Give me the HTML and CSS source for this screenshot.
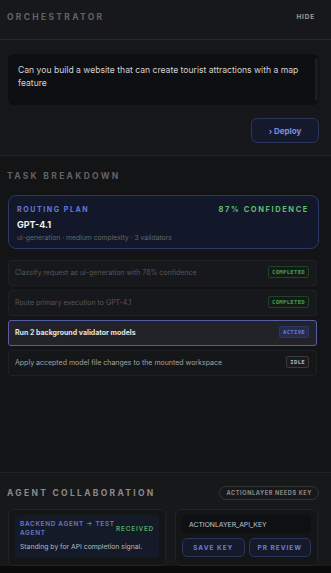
FILE: index.html
```html
<!DOCTYPE html>
<html lang="en">

<head>
    <meta charset="UTF-8">
    <title>Orchestrator</title>
    <link rel="stylesheet" href="styles.css">
</head>

<body>
    <div class="app">
        <header class="top_bar">
            <span class="eyebrow">Orchestrator</span>
            <span class="hide_link">Hide</span>
        </header>

        <section class="prompt">
            <div class="prompt_box">
                <p>Can you build a website that can create tourist attractions with a map feature</p>
                <div class="scroll_thumb"></div>
            </div>
            <div class="prompt_actions">
                <button class="deploy">&rsaquo; Deploy</button>
            </div>
        </section>

        <section class="tasks">
            <h3 class="eyebrow">Task Breakdown</h3>

            <div class="plan">
                <div class="plan_head">
                    <span class="plan_label">Routing Plan</span>
                    <span class="plan_conf">87% Confidence</span>
                </div>
                <div class="plan_model">GPT-4.1</div>
                <div class="plan_meta">ui-generation · medium complexity · 3 validators</div>
            </div>

            <div class="task_list">
                <div class="task done">
                    <span>Classify request as ui-generation with 78% confidence</span>
                    <span class="badge green">Completed</span>
                </div>
                <div class="task done">
                    <span>Route primary execution to GPT-4.1</span>
                    <span class="badge green">Completed</span>
                </div>
                <div class="task active">
                    <span>Run 2 background validator models</span>
                    <span class="badge blue">Active</span>
                </div>
                <div class="task idle">
                    <span>Apply accepted model file changes to the mounted workspace</span>
                    <span class="badge gray">Idle</span>
                </div>
            </div>
        </section>

        <section class="collab">
            <div class="collab_head">
                <h3 class="eyebrow light">Agent Collaboration</h3>
                <span class="pill">ActionLayer needs key</span>
            </div>

            <div class="collab_grid">
                <div class="panel">
                    <div class="message">
                        <div class="message_head">
                            <span class="message_route">Backend Agent &rarr; Test Agent</span>
                            <span class="message_state">Received</span>
                        </div>
                        <div class="message_body">Standing by for API completion signal.</div>
                    </div>
                </div>
                <div class="panel">
                    <div class="key_input">ACTIONLAYER_API_KEY</div>
                    <div class="key_actions">
                        <button class="ghost">Save Key</button>
                        <button class="ghost">PR Review</button>
                    </div>
                </div>
            </div>
        </section>
        <div class="bottom_strip"></div>
    </div>
</body>

</html>
```

FILE: styles.css
```css
* {
    box-sizing: border-box;
}

body {
    margin: 0;
    background: #131416;
    font-family: Inter, "Liberation Sans", sans-serif;
    color: #d6d6d6;
}

.app {
    display: flex;
    flex-direction: column;
    height: 573px;
    overflow: hidden;
}

h3 {
    margin: 0;
}

.eyebrow {
    font-size: 8.5px;
    font-weight: 700;
    letter-spacing: 2.3px;
    text-transform: uppercase;
    color: #626262;
}

.eyebrow.light {
    color: #8a8a8a;
}

.top_bar {
    height: 40px;
    display: flex;
    justify-content: space-between;
    align-items: center;
    padding: 0 16px 6px 7px;
    background: #17181b;
    border-bottom: 1px solid #26272b;
}

.hide_link {
    font-size: 6.5px;
    font-weight: 700;
    letter-spacing: 0.8px;
    text-transform: uppercase;
    color: #9c9c9c;
}

.prompt {
    padding: 14px 12px 12px 8px;
    background: #16171a;
    border-bottom: 1px solid #232428;
}

.prompt_box {
    position: relative;
    height: 51px;
    background: #0e0f12;
    border-radius: 6px;
    padding: 10px 12px 0 10px;
}

.prompt_box p {
    margin: 0;
    font-size: 8.6px;
    line-height: 13px;
    color: #d4d4d4;
}

.scroll_thumb {
    position: absolute;
    right: 1px;
    top: 4px;
    bottom: 4px;
    width: 3px;
    border-radius: 2px;
    background: #1c1d20;
}

.prompt_actions {
    display: flex;
    justify-content: flex-end;
    margin-top: 13px;
}

.deploy {
    width: 68px;
    height: 25px;
    border-radius: 6px;
    border: 1px solid #2b3558;
    background: #141a2b;
    color: #7e8de0;
    font-family: inherit;
    font-size: 8px;
    font-weight: 700;
    cursor: pointer;
}

.tasks {
    flex: 1;
    padding: 15px 14px 0 8px;
    background: #131416;
}

.tasks .eyebrow {
    margin-left: -1px;
}

.plan {
    margin-top: 14px;
    margin-right: -2px;
    height: 54px;
    border: 1px solid #2d3866;
    border-radius: 8px;
    background: #121829;
    padding: 9px 9px 0 8px;
}

.plan_head {
    display: flex;
    justify-content: space-between;
}

.plan_label,
.plan_conf {
    font-size: 7px;
    font-weight: 700;
    letter-spacing: 1.6px;
    text-transform: uppercase;
}

.plan_label {
    color: #6a78d2;
}

.plan_conf {
    color: #5dbf6e;
    font-size: 7.5px;
}

.plan_model {
    margin-top: 5px;
    font-size: 9px;
    font-weight: 700;
    color: #f0f0f0;
}

.plan_meta {
    margin-top: 3px;
    font-size: 6.8px;
    color: #656565;
}

.task_list {
    margin-top: 11px;
    display: flex;
    flex-direction: column;
    gap: 4px;
}

.task {
    height: 26px;
    display: flex;
    justify-content: space-between;
    align-items: center;
    padding: 0 7px 2px 6px;
    border: 1px solid #1f2023;
    border-radius: 3px;
    background: #17181b;
    font-size: 7px;
}

.task.done {
    color: #575757;
}

.task.active {
    background: #222328;
    border-color: #565fa4;
    color: #e2e2e2;
    font-weight: 700;
}

.task.idle {
    color: #a3a3a3;
    background: #151618;
}

.badge {
    font-family: "DejaVu Sans Mono", monospace;
    font-size: 5.6px;
    font-weight: 700;
    letter-spacing: 0.3px;
    text-transform: uppercase;
    padding: 2px 3px;
    border-radius: 2px;
    border: 1px solid;
}

.badge.green {
    color: #4b9a5b;
    border-color: #21412a;
    background: #121c15;
}

.badge.blue {
    color: #6c7bd0;
    border-color: #2e3763;
    background: #252c4d;
}

.badge.gray {
    color: #b5b5b5;
    border-color: #3a3a3d;
    background: #1b1b1e;
}

.collab {
    padding: 13px 12px 0 8px;
    background: #17181a;
    border-top: 1px solid #222326;
}

.collab_head {
    display: flex;
    justify-content: space-between;
    align-items: center;
}

.collab_head .eyebrow {
    margin-left: -1px;
}

.pill {
    font-size: 5.6px;
    font-weight: 700;
    letter-spacing: 0.6px;
    text-transform: uppercase;
    color: #8a8a8a;
    border: 1px solid #333438;
    border-radius: 8px;
    padding: 3px 6px;
}

.collab_grid {
    margin-top: 9px;
    display: grid;
    grid-template-columns: 158px 143px;
    gap: 9px;
}

.panel {
    height: 57px;
    border: 1px solid #222327;
    border-radius: 6px;
    background: #141517;
    padding: 5px 6px 0 6px;
}

.message {
    height: 43px;
    border-radius: 4px;
    background: #151a28;
    padding: 5px 5px 0 5px;
}

.message_head {
    display: flex;
    justify-content: space-between;
    align-items: center;
}

.message_route {
    width: 100px;
    font-size: 6.4px;
    font-weight: 600;
    letter-spacing: 0.7px;
    line-height: 9px;
    text-transform: uppercase;
    color: #6a78c6;
}

.message_state {
    font-size: 6.4px;
    font-weight: 600;
    letter-spacing: 0.8px;
    text-transform: uppercase;
    color: #57a865;
}

.message_body {
    margin-top: 4px;
    font-size: 6.8px;
    color: #b6b6b6;
}

.key_input {
    height: 18px;
    display: flex;
    align-items: center;
    padding: 0 7px;
    border-radius: 4px;
    background: #0f1013;
    font-size: 6.8px;
    color: #c9c9c9;
}

.key_actions {
    margin-top: 5px;
    display: grid;
    grid-template-columns: 1fr 1fr;
    gap: 4px;
}

.ghost {
    height: 19px;
    border: 1px solid #2b3558;
    border-radius: 5px;
    background: #151a2a;
    color: #6f7fd6;
    font-family: inherit;
    font-size: 6.5px;
    font-weight: 700;
    letter-spacing: 1px;
    text-transform: uppercase;
    cursor: pointer;
}

.bottom_strip {
    height: 7px;
    background: #0a0a0b;
}
```
